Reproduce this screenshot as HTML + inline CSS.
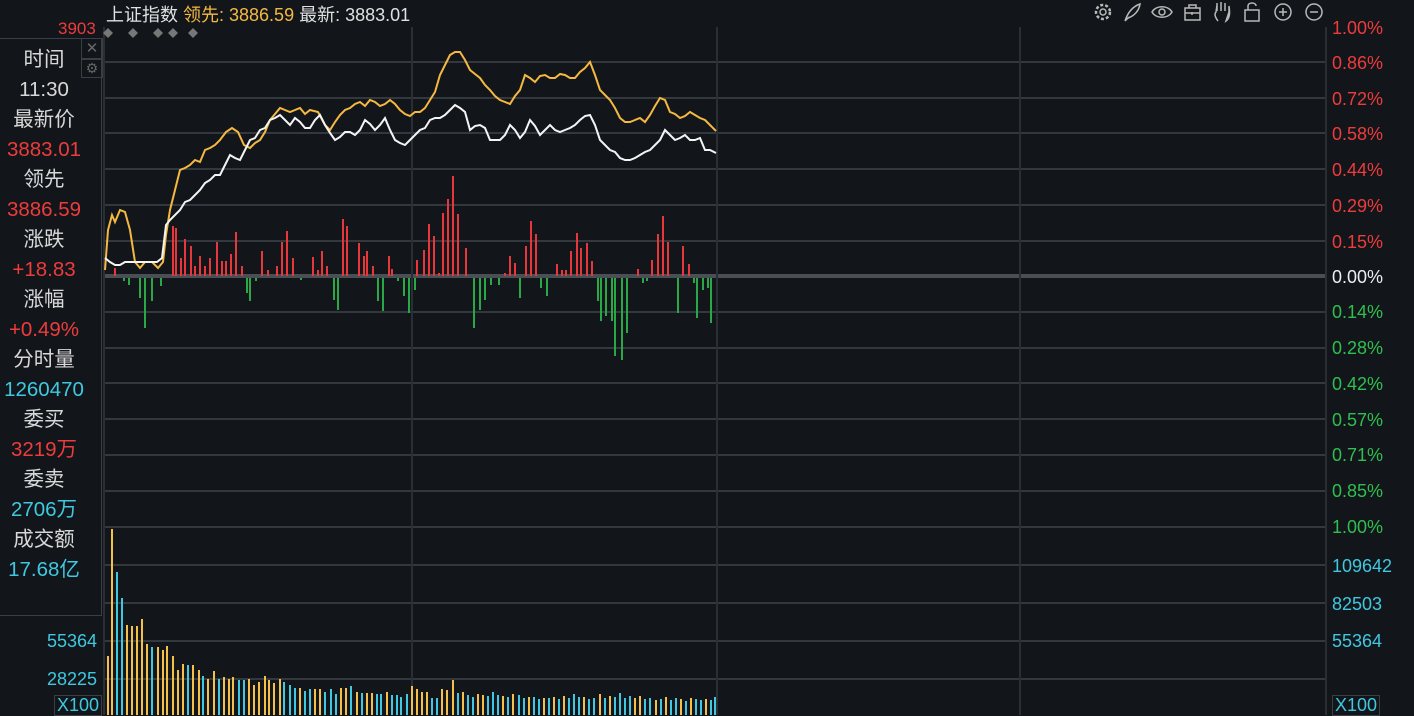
<!DOCTYPE html>
<html><head><meta charset="utf-8"><style>
body{margin:0;width:1414px;height:715px;background:#12161b;overflow:hidden;font-family:"Liberation Sans","Noto Sans CJK SC",sans-serif;position:relative}
.t{position:absolute;white-space:nowrap}
.lp{position:absolute;left:0;top:38px;width:101px;height:570px;border-right:1px solid #3a3f45;border-top:1px solid #3a3f45;border-bottom:1px solid #3a3f45}
.lp div{width:88px;height:30px;line-height:30px;text-align:center;font-size:20.5px;color:#d8d8d8}
.r{color:#ee3b3b!important}.c{color:#3fc8e0!important}
.ra{position:absolute;left:1332px;font-size:18px}
</style></head><body>
<svg width="1414" height="715" style="position:absolute;left:0;top:0">
<g stroke="#33383e" stroke-width="2">
<line x1="104" y1="62" x2="1326" y2="62"/><line x1="104" y1="98" x2="1326" y2="98"/><line x1="104" y1="133" x2="1326" y2="133"/><line x1="104" y1="169" x2="1326" y2="169"/><line x1="104" y1="205" x2="1326" y2="205"/><line x1="104" y1="241" x2="1326" y2="241"/><line x1="104" y1="312" x2="1326" y2="312"/><line x1="104" y1="348" x2="1326" y2="348"/><line x1="104" y1="383" x2="1326" y2="383"/><line x1="104" y1="419" x2="1326" y2="419"/><line x1="104" y1="455" x2="1326" y2="455"/><line x1="104" y1="491" x2="1326" y2="491"/><line x1="104" y1="527" x2="1326" y2="527"/><line x1="104" y1="565" x2="1326" y2="565"/><line x1="104" y1="603" x2="1326" y2="603"/><line x1="104" y1="641" x2="1326" y2="641"/><line x1="104" y1="679" x2="1326" y2="679"/>
</g>
<line x1="104" y1="276" x2="1326" y2="276" stroke="#4a4f55" stroke-width="4"/>
<g stroke="#2a2f35" stroke-width="2"><line x1="104" y1="27" x2="104" y2="715"/><line x1="412" y1="27" x2="412" y2="715"/><line x1="717" y1="27" x2="717" y2="715"/><line x1="1020" y1="27" x2="1020" y2="715"/><line x1="1326" y1="27" x2="1326" y2="715"/></g>
<g fill="#e8373a">
<rect x="114" y="268" width="2" height="8"/><rect x="172" y="226" width="2" height="50"/><rect x="175" y="228" width="2" height="48"/><rect x="180" y="258" width="2" height="18"/><rect x="184" y="239" width="2" height="37"/><rect x="190" y="246" width="2" height="30"/><rect x="194" y="266" width="2" height="10"/><rect x="199" y="256" width="2" height="20"/><rect x="204" y="266" width="2" height="10"/><rect x="209" y="258" width="2" height="18"/><rect x="216" y="242" width="2" height="34"/><rect x="221" y="261" width="2" height="15"/><rect x="225" y="261" width="2" height="15"/><rect x="230" y="254" width="2" height="22"/><rect x="235" y="232" width="2" height="44"/><rect x="241" y="266" width="2" height="10"/><rect x="261" y="251" width="2" height="25"/><rect x="267" y="270" width="2" height="6"/><rect x="276" y="266" width="2" height="10"/><rect x="281" y="242" width="2" height="34"/><rect x="286" y="231" width="2" height="45"/><rect x="292" y="258" width="2" height="18"/><rect x="312" y="257" width="2" height="19"/><rect x="317" y="270" width="2" height="6"/><rect x="321" y="251" width="2" height="25"/><rect x="326" y="266" width="2" height="10"/><rect x="342" y="219" width="2" height="57"/><rect x="346" y="226" width="2" height="50"/><rect x="358" y="243" width="2" height="33"/><rect x="363" y="256" width="2" height="20"/><rect x="366" y="251" width="2" height="25"/><rect x="372" y="266" width="2" height="10"/><rect x="388" y="256" width="2" height="20"/><rect x="391" y="269" width="2" height="7"/><rect x="416" y="260" width="2" height="16"/><rect x="423" y="250" width="2" height="26"/><rect x="428" y="224" width="2" height="52"/><rect x="433" y="236" width="2" height="40"/><rect x="438" y="273" width="2" height="3"/><rect x="442" y="213" width="2" height="63"/><rect x="447" y="199" width="2" height="77"/><rect x="452" y="176" width="2" height="100"/><rect x="457" y="214" width="2" height="62"/><rect x="465" y="248" width="2" height="28"/><rect x="504" y="273" width="2" height="3"/><rect x="509" y="256" width="2" height="20"/><rect x="514" y="263" width="2" height="13"/><rect x="525" y="246" width="2" height="30"/><rect x="530" y="221" width="2" height="55"/><rect x="535" y="234" width="2" height="42"/><rect x="556" y="264" width="2" height="12"/><rect x="561" y="270" width="2" height="6"/><rect x="565" y="270" width="2" height="6"/><rect x="570" y="251" width="2" height="25"/><rect x="576" y="233" width="2" height="43"/><rect x="580" y="248" width="2" height="28"/><rect x="586" y="243" width="2" height="33"/><rect x="591" y="261" width="2" height="15"/><rect x="637" y="269" width="2" height="7"/><rect x="651" y="260" width="2" height="16"/><rect x="657" y="234" width="2" height="42"/><rect x="662" y="216" width="2" height="60"/><rect x="667" y="242" width="2" height="34"/><rect x="682" y="246" width="2" height="30"/><rect x="688" y="264" width="2" height="12"/>
</g>
<g fill="#2aa845">
<rect x="123" y="278" width="2" height="3"/><rect x="128" y="278" width="2" height="7"/><rect x="139" y="278" width="2" height="20"/><rect x="144" y="278" width="2" height="50"/><rect x="151" y="278" width="2" height="23"/><rect x="160" y="278" width="2" height="8"/><rect x="246" y="278" width="2" height="15"/><rect x="249" y="278" width="2" height="23"/><rect x="255" y="278" width="2" height="3"/><rect x="300" y="278" width="2" height="2"/><rect x="333" y="278" width="2" height="22"/><rect x="337" y="278" width="2" height="32"/><rect x="377" y="278" width="2" height="23"/><rect x="382" y="278" width="2" height="33"/><rect x="397" y="278" width="2" height="3"/><rect x="403" y="278" width="2" height="18"/><rect x="408" y="278" width="2" height="35"/><rect x="414" y="278" width="2" height="12"/><rect x="473" y="278" width="2" height="50"/><rect x="479" y="278" width="2" height="32"/><rect x="484" y="278" width="2" height="22"/><rect x="490" y="278" width="2" height="7"/><rect x="498" y="278" width="2" height="7"/><rect x="519" y="278" width="2" height="20"/><rect x="540" y="278" width="2" height="10"/><rect x="546" y="278" width="2" height="18"/><rect x="597" y="278" width="2" height="23"/><rect x="600" y="278" width="2" height="43"/><rect x="605" y="278" width="2" height="38"/><rect x="611" y="278" width="2" height="43"/><rect x="614" y="278" width="2" height="78"/><rect x="621" y="278" width="2" height="82"/><rect x="626" y="278" width="2" height="55"/><rect x="642" y="278" width="2" height="5"/><rect x="646" y="278" width="2" height="3"/><rect x="677" y="278" width="2" height="35"/><rect x="693" y="278" width="2" height="5"/><rect x="696" y="278" width="2" height="40"/><rect x="702" y="278" width="2" height="12"/><rect x="707" y="278" width="2" height="10"/><rect x="710" y="278" width="2" height="45"/>
</g>
<g fill="#f5c04a">
<rect x="107" y="656" width="2" height="59"/><rect x="111" y="529" width="2" height="186"/><rect x="126" y="625" width="2" height="90"/><rect x="131" y="626" width="2" height="89"/><rect x="136" y="626" width="2" height="89"/><rect x="141" y="619" width="2" height="96"/><rect x="146" y="644" width="2" height="71"/><rect x="157" y="647" width="2" height="68"/><rect x="162" y="650" width="2" height="65"/><rect x="166" y="646" width="2" height="69"/><rect x="172" y="656" width="2" height="59"/><rect x="177" y="670" width="2" height="45"/><rect x="182" y="664" width="2" height="51"/><rect x="192" y="665" width="2" height="50"/><rect x="198" y="670" width="2" height="45"/><rect x="207" y="679" width="2" height="36"/><rect x="213" y="671" width="2" height="44"/><rect x="223" y="677" width="2" height="38"/><rect x="228" y="679" width="2" height="36"/><rect x="232" y="677" width="2" height="38"/><rect x="248" y="679" width="2" height="36"/><rect x="253" y="685" width="2" height="30"/><rect x="258" y="682" width="2" height="33"/><rect x="264" y="676" width="2" height="39"/><rect x="268" y="680" width="2" height="35"/><rect x="273" y="683" width="2" height="32"/><rect x="279" y="679" width="2" height="36"/><rect x="299" y="688" width="2" height="27"/><rect x="314" y="689" width="2" height="26"/><rect x="319" y="689" width="2" height="26"/><rect x="340" y="688" width="2" height="27"/><rect x="345" y="688" width="2" height="27"/><rect x="356" y="692" width="2" height="23"/><rect x="366" y="693" width="2" height="22"/><rect x="371" y="693" width="2" height="22"/><rect x="386" y="692" width="2" height="23"/><rect x="411" y="686" width="2" height="29"/><rect x="416" y="689" width="2" height="26"/><rect x="421" y="692" width="2" height="23"/><rect x="426" y="692" width="2" height="23"/><rect x="441" y="689" width="2" height="26"/><rect x="446" y="690" width="2" height="25"/><rect x="452" y="680" width="2" height="35"/><rect x="462" y="692" width="2" height="23"/><rect x="477" y="694" width="2" height="21"/><rect x="482" y="695" width="2" height="20"/><rect x="502" y="696" width="2" height="19"/><rect x="512" y="694" width="2" height="21"/><rect x="528" y="697" width="2" height="18"/><rect x="543" y="698" width="2" height="17"/><rect x="553" y="697" width="2" height="18"/><rect x="563" y="696" width="2" height="19"/><rect x="583" y="697" width="2" height="18"/><rect x="599" y="694" width="2" height="21"/><rect x="609" y="696" width="2" height="19"/><rect x="634" y="698" width="2" height="17"/><rect x="639" y="696" width="2" height="19"/><rect x="655" y="700" width="2" height="15"/><rect x="665" y="697" width="2" height="18"/><rect x="680" y="699" width="2" height="16"/><rect x="690" y="698" width="2" height="17"/><rect x="705" y="699" width="2" height="16"/>
</g>
<g fill="#3fc8e0">
<rect x="116" y="572" width="2" height="143"/><rect x="121" y="598" width="2" height="117"/><rect x="151" y="647" width="2" height="68"/><rect x="187" y="665" width="2" height="50"/><rect x="202" y="676" width="2" height="39"/><rect x="218" y="679" width="2" height="36"/><rect x="238" y="680" width="2" height="35"/><rect x="243" y="680" width="2" height="35"/><rect x="283" y="682" width="2" height="33"/><rect x="289" y="685" width="2" height="30"/><rect x="294" y="688" width="2" height="27"/><rect x="304" y="691" width="2" height="24"/><rect x="309" y="689" width="2" height="26"/><rect x="324" y="692" width="2" height="23"/><rect x="330" y="689" width="2" height="26"/><rect x="335" y="694" width="2" height="21"/><rect x="350" y="686" width="2" height="29"/><rect x="361" y="693" width="2" height="22"/><rect x="376" y="694" width="2" height="21"/><rect x="380" y="694" width="2" height="21"/><rect x="391" y="695" width="2" height="20"/><rect x="396" y="695" width="2" height="20"/><rect x="400" y="697" width="2" height="18"/><rect x="406" y="694" width="2" height="21"/><rect x="431" y="698" width="2" height="17"/><rect x="436" y="698" width="2" height="17"/><rect x="457" y="693" width="2" height="22"/><rect x="467" y="695" width="2" height="20"/><rect x="472" y="697" width="2" height="18"/><rect x="487" y="696" width="2" height="19"/><rect x="492" y="692" width="2" height="23"/><rect x="497" y="695" width="2" height="20"/><rect x="507" y="697" width="2" height="18"/><rect x="518" y="695" width="2" height="20"/><rect x="523" y="698" width="2" height="17"/><rect x="533" y="697" width="2" height="18"/><rect x="538" y="699" width="2" height="16"/><rect x="548" y="698" width="2" height="17"/><rect x="558" y="699" width="2" height="16"/><rect x="568" y="698" width="2" height="17"/><rect x="573" y="694" width="2" height="21"/><rect x="578" y="697" width="2" height="18"/><rect x="588" y="699" width="2" height="16"/><rect x="593" y="698" width="2" height="17"/><rect x="604" y="698" width="2" height="17"/><rect x="614" y="697" width="2" height="18"/><rect x="619" y="693" width="2" height="22"/><rect x="624" y="698" width="2" height="17"/><rect x="629" y="696" width="2" height="19"/><rect x="644" y="699" width="2" height="16"/><rect x="649" y="698" width="2" height="17"/><rect x="660" y="699" width="2" height="16"/><rect x="670" y="700" width="2" height="15"/><rect x="675" y="698" width="2" height="17"/><rect x="685" y="701" width="2" height="14"/><rect x="695" y="699" width="2" height="16"/><rect x="700" y="700" width="2" height="15"/><rect x="710" y="700" width="2" height="15"/><rect x="714" y="697" width="2" height="18"/>
</g>
<polyline fill="none" stroke="#f5b841" stroke-width="2" points="105,270 108,230 112,215 115,222 120,210 125,212 130,230 135,262 140,268 145,262 152,262 158,268 163,262 166,235 170,210 175,190 180,170 185,168 190,165 195,160 200,162 205,150 210,148 215,145 220,140 226,132 232,128 238,132 244,145 250,148 255,143 260,140 265,132 270,120 275,114 280,108 285,110 290,112 295,110 300,108 305,114 310,110 318,112 325,125 330,130 335,122 340,115 345,110 350,108 355,104 360,102 365,106 370,100 375,102 380,106 385,104 390,100 395,104 400,110 405,114 410,116 415,112 420,112 425,108 430,100 435,92 440,75 445,65 450,55 455,52 460,52 465,60 470,70 475,74 480,78 485,85 490,90 495,96 500,100 505,102 510,104 515,96 520,90 525,75 530,78 535,82 540,76 545,75 550,78 555,78 560,74 565,75 570,78 575,78 580,72 585,68 590,62 595,75 600,90 605,95 610,100 615,108 620,118 625,122 630,122 635,120 640,118 645,122 650,115 655,106 660,98 665,100 670,112 675,114 680,118 685,116 690,112 695,115 700,118 705,120 710,125 716,131"/>
<polyline fill="none" stroke="#f4f4f4" stroke-width="2" points="105,258 110,262 115,265 120,265 125,262 132,262 140,262 150,262 157,262 162,258 166,225 170,220 175,215 180,210 185,202 190,200 195,195 200,190 205,183 210,180 215,175 220,175 225,165 230,155 235,158 240,160 245,150 250,140 255,138 260,130 265,128 270,120 275,118 280,115 285,120 290,125 295,118 300,122 305,128 310,128 315,120 320,115 325,125 330,133 335,140 340,137 345,132 350,132 355,135 360,130 365,120 370,124 375,130 380,125 385,118 390,130 395,140 400,143 405,145 410,140 415,135 420,130 425,128 430,120 435,118 440,118 445,115 450,110 455,105 460,108 465,112 470,130 475,126 480,125 485,128 490,140 495,140 500,140 505,135 510,125 515,130 520,138 525,132 530,120 535,126 540,135 545,130 550,125 555,130 560,132 565,130 570,128 575,125 580,120 585,116 590,115 595,125 600,140 605,145 610,150 615,152 620,158 625,160 630,160 635,158 640,155 645,152 650,150 655,145 660,140 665,130 670,135 675,140 680,138 685,135 690,140 695,140 700,138 705,150 710,150 716,153"/>
<g fill="#777"><path d="M108,28 l5,5 -5,5 -5,-5z"/><path d="M133,28 l5,5 -5,5 -5,-5z"/><path d="M158,28 l5,5 -5,5 -5,-5z"/><path d="M173,28 l5,5 -5,5 -5,-5z"/><path d="M193,28 l5,5 -5,5 -5,-5z"/></g>
<g fill="none" stroke="#b8b8b8" stroke-width="1.5">
<circle cx="1103" cy="12" r="3"/><circle cx="1103" cy="12" r="7" stroke-dasharray="3 2" stroke-width="2.5"/>
<path d="M1125,21 C1127,15 1131,7 1140,4 C1139,11 1134,16 1128,18 M1125,21 L1129,17"/>
<path d="M1152,12 C1156,5 1168,5 1172,12 C1168,19 1156,19 1152,12z"/><circle cx="1162" cy="12" r="3"/>
<rect x="1185" y="8" width="15" height="12"/><path d="M1189,8 v-3 h7 v3 M1185,13 h15 M1192,12 v3"/>
<path d="M1218,21 C1215,17 1214,14 1216,12 L1217,5 M1217,11 V3 M1221,11 V2 M1225,11 V3 M1229,12 V6 C1230,13 1230,18 1226,21z"/>
<rect x="1245" y="10" width="14" height="11"/><path d="M1248,10 V6 C1248,2 1256,2 1256,6"/>
<circle cx="1283" cy="12" r="8"/><path d="M1279,12 h8 M1283,8 v8"/>
<circle cx="1314" cy="12" r="8"/><path d="M1310,12 h8"/>
</g>
</svg>
<div class="t" style="left:106px;top:1px;font-size:18px;color:#e0e0e0">上证指数 <span style="color:#f5b841">领先: 3886.59</span> 最新: 3883.01</div>
<div class="t r" style="left:58px;top:19px;font-size:17px">3903</div>
<div class="t" style="left:81px;top:38px;width:20px;height:20px;border:1px solid #3a3f45;color:#666;font-size:15px;text-align:center;line-height:20px">✕</div>
<div class="t" style="left:81px;top:58px;width:20px;height:18px;border:1px solid #3a3f45;color:#666;font-size:14px;text-align:center;line-height:18px">⚙</div>
<div class="lp" style="padding-top:6px">
<div>时间</div><div>11:30</div><div>最新价</div><div class="r">3883.01</div><div>领先</div><div class="r">3886.59</div><div>涨跌</div><div class="r">+18.83</div><div>涨幅</div><div class="r">+0.49%</div><div>分时量</div><div class="c">1260470</div><div>委买</div><div class="r">3219万</div><div>委卖</div><div class="c">2706万</div><div>成交额</div><div class="c">17.68亿</div>
</div>
<div class="t c" style="left:47px;top:631px;font-size:18px">55364</div>
<div class="t c" style="left:47px;top:669px;font-size:18px">28225</div>
<div class="t c" style="left:54px;top:695px;font-size:18px;border:1px solid #3a3f45;padding:0 2px;line-height:19px">X100</div>
<div class="ra r" style="top:18px">1.00%</div><div class="ra r" style="top:53px">0.86%</div><div class="ra r" style="top:89px">0.72%</div><div class="ra r" style="top:124px">0.58%</div><div class="ra r" style="top:160px">0.44%</div><div class="ra r" style="top:196px">0.29%</div><div class="ra r" style="top:232px">0.15%</div><div class="ra" style="top:267px;color:#eee">0.00%</div>
<div class="ra" style="top:302px;color:#2fbf4f">0.14%</div><div class="ra" style="top:338px;color:#2fbf4f">0.28%</div><div class="ra" style="top:374px;color:#2fbf4f">0.42%</div><div class="ra" style="top:410px;color:#2fbf4f">0.57%</div><div class="ra" style="top:445px;color:#2fbf4f">0.71%</div><div class="ra" style="top:481px;color:#2fbf4f">0.85%</div><div class="ra" style="top:517px;color:#2fbf4f">1.00%</div>
<div class="ra c" style="top:556px">109642</div><div class="ra c" style="top:594px">82503</div><div class="ra c" style="top:631px">55364</div>
<div class="ra c" style="top:695px;border:1px solid #3a3f45;line-height:19px;padding:0 2px">X100</div>
</body></html>
